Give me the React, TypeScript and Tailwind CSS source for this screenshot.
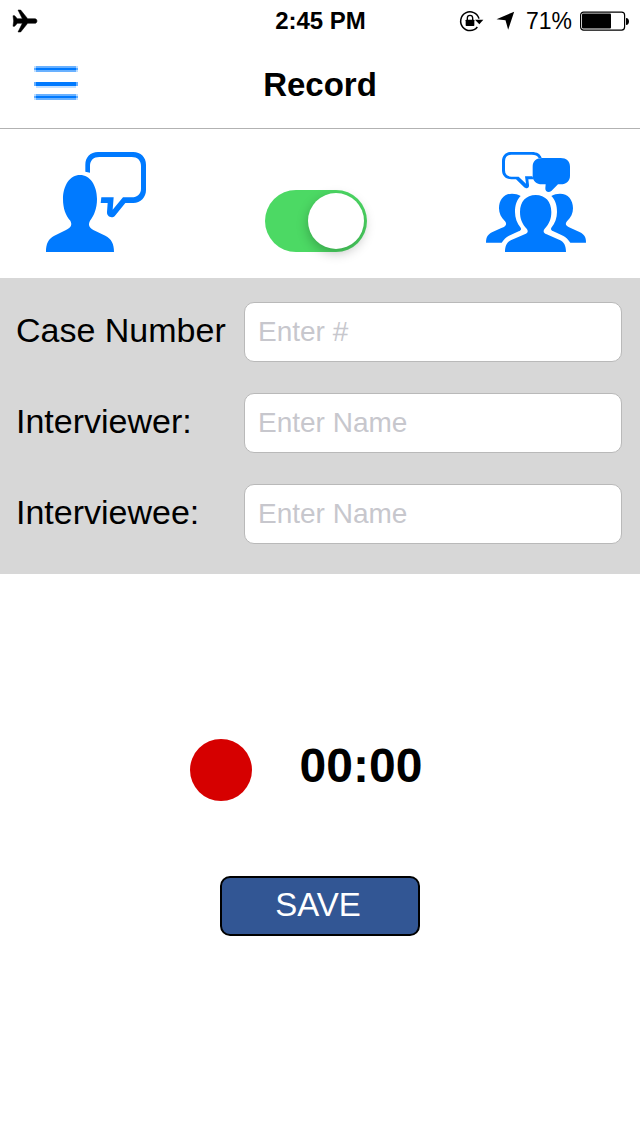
import { useState } from "react";

function StatusBar() {
  return (
    <div className="grid h-[41px] grid-cols-[1fr_auto_1fr] items-center pr-[11px] pl-3 text-black">
      <svg viewBox="36 24 78 72" className="h-6 w-[26px]" role="img" aria-label="Airplane mode">
        <path
          d="M39 44h5l8 9h15L54 27h8l21 26h22c8 1 8 13 0 14H83L62 93h-8l13-26H52l-8 9h-5l2-16z"
          fill="currentColor"
          stroke="currentColor"
          strokeWidth="1.500"
        />
      </svg>
      <time className="text-[24px] leading-10 font-bold">2:45 PM</time>
      <div className="flex items-center justify-end">
        <svg viewBox="30 24 75 72" className="h-6 w-[25px]" role="img" aria-label="Rotation lock">
          <path d="M85 78A28 28 0 1 1 90 53" fill="none" stroke="currentColor" strokeWidth="4.500" />
          <path d="M78 56h25L91 70z" fill="currentColor" />
          <rect x="50" y="56" width="26" height="19" rx="2" fill="currentColor" />
          <path d="M55 58v-7a8 8 0 0 1 16 0v7" fill="none" stroke="currentColor" strokeWidth="4" />
        </svg>
        <svg viewBox="138 33 56 57" className="ml-3 h-[19px] w-[19px]" role="img" aria-label="Location">
          <path d="M192 35L174 89l-8-28-27-3z" fill="currentColor" />
        </svg>
        <span className="ml-[11px] text-[23px] leading-10">71%</span>
        <svg viewBox="0 0 49 20" className="ml-2 h-5 w-[49px]" role="img" aria-label="Battery">
          <rect x="0.600" y="1.100" width="44" height="18" rx="3" fill="none" stroke="currentColor" strokeWidth="1.200" />
          <rect x="2" y="2.600" width="29" height="15" rx="1" fill="currentColor" />
          <path d="M46 7c4 0 4 7 0 7z" fill="currentColor" />
        </svg>
      </div>
    </div>
  );
}

function MenuIcon() {
  return (
    <svg viewBox="0 0 44 34" className="h-[34px] w-11" aria-hidden="true">
      <g fill="#007aff">
        <path d="M0 0h44v6H0z" opacity="0.250" />
        <path d="M2 0h40v6H2z" opacity="0.450" />
        <path d="M0 2h44v2H0z" opacity="0.500" />
        <path d="M2 2h40v2H2z" />
        <path d="M0 16h44v4H0z" opacity="0.600" />
        <path d="M2 16h40v4H2z" />
        <path d="M2 20h40v2H2z" opacity="0.220" />
        <path d="M0 28h44v6H0z" opacity="0.250" />
        <path d="M2 28h40v6H2z" opacity="0.450" />
        <path d="M0 30h44v2H0z" opacity="0.500" />
        <path d="M2 30h40v2H2z" />
      </g>
    </svg>
  );
}

function SingleSpeakerIcon() {
  return (
    <svg viewBox="30 36 300 300" className="size-[100px]" role="img" aria-label="One person">
      <path
        d="M132 105c30 0 51 31 51 72 0 28-9 51-21 65-6 12-3 20 10 28l36 17c18 9 26 24 26 49H30c0-25 7-40 25-49l35-17c16-8 19-16 13-28-14-15-22-37-22-65 0-41 21-72 51-72z"
        fill="#007aff"
      />
      <path
        d="M148 95V74c0-22 15-38 38-38h106c22 0 38 16 38 38v76c0 22-16 39-38 39h-24l-31 38c-8 9-25 4-24-11l2-27h-21l2-17h37l-3 37 31-37h26c17 0 28-10 28-26V78c0-17-11-27-28-27h-97c-17 0-28 10-28 27v20z"
        fill="#007aff"
      />
    </svg>
  );
}

function GroupIcon() {
  return (
    <svg viewBox="30 36 300 300" className="size-[100px]" role="img" aria-label="Group">
      <g fill="#007aff">
        <path d="M108 161c10 0 18 2 26 7-12 12-17 28-17 48 0 18 6 34 17 47 3 5 0 8-6 11l-29 13c-9 4-15 11-22 21H30c0-17 6-25 18-31l28-13c14-6 18-11 11-20-12-11-18-24-18-39 0-26 15-44 39-44z" />
        <path d="M252 161c-10 0-18 2-26 7 12 12 17 28 17 48 0 18-6 34-17 47-3 5 0 8 6 11l29 13c9 4 15 11 22 21h47c0-17-6-25-18-31l-28-13c-14-6-18-11-11-20 12-11 18-24 18-39 0-26-15-44-39-44z" />
        <path d="M179 165c29 0 47 20 47 51 0 21-7 37-20 50-6 8-3 13 6 17l39 17c13 6 19 17 19 36H87c0-19 6-30 19-36l40-17c9-4 12-9 6-17-13-13-20-29-20-50 0-31 18-51 47-51z" />
        <path d="M198 54h56c17 0 28 10 28 26v27c0 16-11 26-28 26h-8l-20 20c-8 7-19 2-18-8l1-12h-11c-17 0-28-10-28-26V80c0-16 11-26 28-26z" />
        <path d="M78 64c0-17 11-28 28-28h61c17 0 26 6 30 18h-9c-4-7-10-10-21-10h-61c-12 0-19 7-19 20v27c0 12 7 19 19 19h22l22 21-3-22h22l4 9h-16l2 17c1 11-9 12-16 5l-23-22h-14c-17 0-28-11-28-27z" />
      </g>
    </svg>
  );
}

interface FieldProps {
  id: string;
  label: string;
  placeholder: string;
}

function Field({ id, label, placeholder }: FieldProps) {
  return (
    <div className="flex items-center">
      <label htmlFor={id} className="w-[228px] shrink-0 pb-1 text-[34px] leading-10 whitespace-nowrap text-black">
        {label}
      </label>
      <input
        id={id}
        type="text"
        placeholder={placeholder}
        className="h-[60px] min-w-0 flex-1 rounded-[10px] border border-[#b9b9b9] bg-white px-[13px] text-[28px] text-black placeholder:text-[#c7c7cd]"
      />
    </div>
  );
}

export default function App() {
  const [group, setGroup] = useState(true);

  return (
    <div className="min-h-screen bg-white font-['Liberation_Sans',Arial,sans-serif]">
      <StatusBar />
      <header className="grid h-[88px] grid-cols-[1fr_auto_1fr] items-center border-b border-[#b2b2b2] px-[34px]">
        <button type="button" aria-label="Menu" className="justify-self-start pb-1">
          <MenuIcon />
        </button>
        <h1 className="text-[33px] leading-10 font-bold text-black">Record</h1>
      </header>

      <main>
        <div className="flex items-end justify-between pt-[23px] pr-[54px] pb-[26px] pl-[46px]">
          <SingleSpeakerIcon />
          <input
            type="checkbox"
            role="switch"
            aria-label="Group interview"
            checked={group}
            onChange={(e) => setGroup(e.target.checked)}
            className="flex h-[62px] w-[102px] appearance-none items-center rounded-full bg-[#e5e5ea] px-[3px] before:size-14 before:rounded-full before:bg-white before:shadow-[0_4px_12px_rgba(0,0,0,0.25)] before:content-[''] checked:justify-end checked:bg-[#4cd964]"
          />
          <GroupIcon />
        </div>

        <form>
          <div className="flex flex-col gap-[31px] bg-[#d7d7d7] pt-6 pr-[18px] pb-[30px] pl-4">
            <Field id="case-number" label="Case Number" placeholder="Enter #" />
            <Field id="interviewer" label="Interviewer:" placeholder="Enter Name" />
            <Field id="interviewee" label="Interviewee:" placeholder="Enter Name" />
          </div>

          <div className="flex items-start justify-center gap-12 pt-[165px] pr-7">
            <button type="button" aria-label="Start recording" className="size-[62px] rounded-full bg-[#d60000]" />
            <output className="text-[48px] leading-[53px] font-bold text-black">00:00</output>
          </div>

          <div className="flex justify-center pt-[75px] pb-10">
            <button
              type="button"
              className="h-[60px] w-[200px] rounded-[10px] border-2 border-black bg-[#325694] pr-1 pb-0.5 text-[33px] leading-10 text-white"
            >
              SAVE
            </button>
          </div>
        </form>
      </main>
    </div>
  );
}
